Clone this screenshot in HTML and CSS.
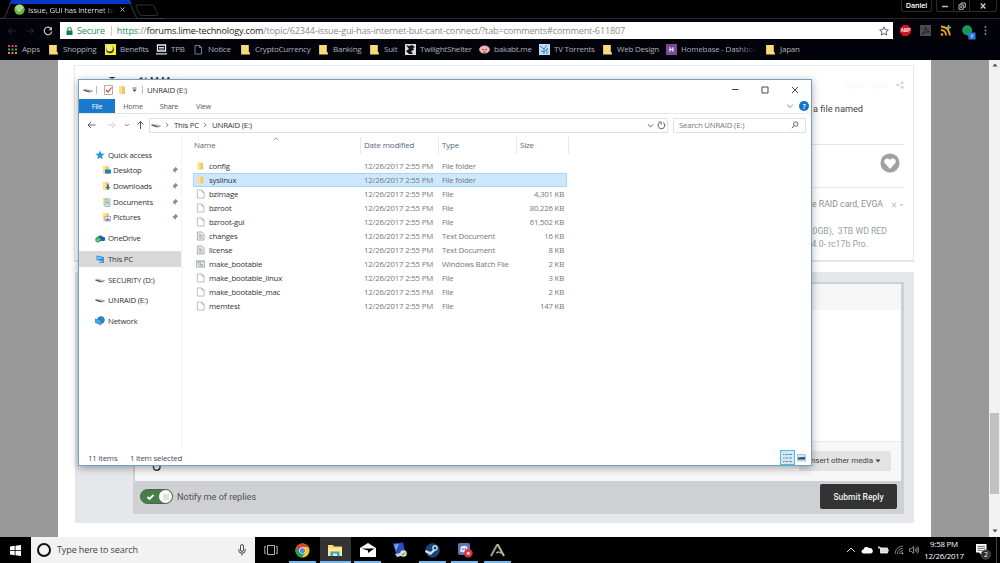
FILE: index.html
```html
<!DOCTYPE html>
<html lang="en">
<head>
    <meta charset="UTF-8">
    <meta name="viewport" content="width=device-width, initial-scale=1.0">
    <title>Desktop</title>
    <link rel="stylesheet" href="styles.css">
</head>
<body>

    <!-- Shared icons -->
    <svg class="sprite">
        <symbol id="folder" viewBox="0 0 10 10"><path d="M2 1h4l2 1v7H2z" fill="#f3c95c"/><path d="M2 1h3v8H2z" fill="#ffe08a"/></symbol>
        <symbol id="note" viewBox="0 0 10 10"><path d="M1 1h7v6l1 1v1.500H1z" fill="#f8dc7c"/></symbol>
        <symbol id="page" viewBox="0 0 10 10"><path d="M1.500.5h5L9 3v6.500H1.500z" fill="#fff" stroke="#999" stroke-width=".7"/><path d="M6.500.5V3H9" fill="none" stroke="#999" stroke-width=".7"/></symbol>
        <symbol id="text" viewBox="0 0 10 10"><path d="M1.500.5h5L9 3v6.500H1.500z" fill="#f4f4f4" stroke="#888" stroke-width=".7"/><path d="M3 3h3M3 4.500h4.500M3 6h4.500M3 7.500h4.500" stroke="#999" stroke-width=".8"/></symbol>
        <symbol id="batch" viewBox="0 0 10 10"><path d="M.5 1.500h9v7h-9z" fill="#eef2f2" stroke="#8c9999" stroke-width=".8"/><path d="M.5 2.500h9" stroke="#9aa" /><circle cx="4" cy="5" r="1.500" fill="none" stroke="#7d9292" stroke-width=".8"/><circle cx="6.500" cy="6.500" r="1.200" fill="none" stroke="#7d9292" stroke-width=".8"/></symbol>
        <symbol id="drive" viewBox="0 0 10 6"><path d="M.5 2.500 2 1.500l7.500 1.700v1.300l-3 .8L.5 3.500z" fill="#c9c9c9"/><path d="M.5 2.600 6.500 4v1.500L.5 3.800z" fill="#555"/><path d="M6.500 4l3-.8v1.300l-3 1z" fill="#999"/></symbol>
        <symbol id="pin" viewBox="0 0 8 8"><path d="M4.500.8 7.200 3.500l-.8.3-1.500 1.500-.2 1.500L3.100 5.200.8 7.300l2-2.500L1.300 3.300l1.500-.2 1.500-1.500z" fill="#858d96"/></symbol>
        <symbol id="chev" viewBox="0 0 6 6"><path d="M.8 2 3 4.200 5.200 2" fill="none" stroke="currentColor" stroke-width=".8"/></symbol>
    </svg>

    <!-- Browser frame -->
    <header class="browser">
        <div class="tabs">
            <svg class="tab-shape" width="165" height="19" viewBox="0 0 165 19">
                <path d="M11 0h119l1.500 4H9.500z" fill="#0a36c4"/>
                <path d="M0 18.500h2.500q2 0 3-3L11 2M129.500 2l6 14q1 2.500 3 2.500H165" fill="none" stroke="#3b3d44"/>
                <path d="M137 5h15.500q1 0 1.500 1l3.500 8q.5 1.500-1 1.500h-15q-1.500 0-2-1l-3.500-8q-.5-1.500 1-1.500z" fill="none" stroke="#303034"/>
            </svg>
            <div class="tab">
                <svg class="favicon" width="11" height="11" viewBox="0 0 11 11"><circle cx="5.500" cy="5.500" r="5.200" fill="#6cb83c"/><path d="M1 4a5 5 0 0 1 8-2L5 7z" fill="#a4d494"/><path d="M3 5.500 5 7.500 9 3" fill="none" stroke="#d8f0c8"/></svg>
                <span class="tab-title">Issue, GUI has internet bu</span>
                <svg class="tab-close" width="5" height="5" viewBox="0 0 5 5"><path d="M.5.5l4 4M4.500.5l-4 4" stroke="#bbb" stroke-width=".9"/></svg>
            </div>
            <div class="frame-buttons">
                <span class="user">Daniel</span>
                <span class="controls">
                    <i><svg width="8" height="8" viewBox="0 0 8 8"><path d="M1 4.500h6" stroke="#bbb" stroke-width="1.500"/></svg></i>
                    <i><svg width="8" height="8" viewBox="0 0 8 8"><path d="M3 2.500V1h4.300v4.300H6M1 2.800h4.300v4.500H1zM2.700 4.500h1v1h-1z" fill="none" stroke="#bbb" stroke-width="1"/></svg></i>
                    <i class="wide"><svg width="8" height="8" viewBox="0 0 8 8"><path d="M1.800 1.500l4.500 5M6.300 1.500l-4.500 5" stroke="#ccc" stroke-width="1.300"/></svg></i>
                </span>
            </div>
        </div>
        <div class="toolbar">
            <div class="nav-icons">
                <svg width="10" height="10" viewBox="0 0 10 10"><path d="M9 5H1.500M4.500 2l-3 3 3 3" fill="none" stroke="#20232b" stroke-width="1.200"/></svg>
                <svg width="10" height="10" viewBox="0 0 10 10"><path d="M1 5h7.500M5.500 2l3 3-3 3" fill="none" stroke="#20232b" stroke-width="1.200"/></svg>
                <svg width="10" height="10" viewBox="0 0 10 10"><path d="M8.200 2.800A3.800 3.800 0 1 0 8.800 5.500" fill="none" stroke="#c4c4c4" stroke-width="1.200"/><path d="M9 .8v3.500H5.500z" fill="#c4c4c4"/></svg>
            </div>
            <div class="omnibox">
                <svg width="7" height="8" viewBox="0 0 7 8"><path d="M.5 3.500h6V8h-6z" fill="#0b8043"/><path d="M1.800 3.500V2a1.700 1.700 0 0 1 3.400 0v1.500" fill="none" stroke="#0b8043"/></svg>
                <span class="secure">Secure</span>
                <span class="url"><b>https</b>://<em>forums.lime-technology.com</em>/topic/62344-issue-gui-has-internet-but-cant-connect/?tab=comments#comment-611807</span>
                <svg class="star" width="10" height="10" viewBox="0 0 10 10"><path d="M5 .8l1.200 2.900 3.100.3-2.300 2 .7 3.100L5 7.500 2.300 9.100 3 6 .7 4l3.100-.3z" fill="none" stroke="#555" stroke-width=".9"/></svg>
            </div>
            <div class="extensions">
                <svg width="11" height="11" viewBox="0 0 11 11"><path d="M3.300 0h4.400L11 3.300v4.400L7.700 11H3.300L0 7.700V3.300z" fill="#d5121e"/><text x="5.500" y="7.100" class="abp">ABP</text></svg>
                <svg width="11" height="11" viewBox="0 0 11 11"><path d="M0 0h11v11H0z" fill="#4b4b4d"/><path d="M2 9q3-2 3.500-7 .5 4 4 5-4-.5-7.500 2" fill="none" stroke="#222" stroke-width="1"/></svg>
                <svg width="11" height="11" viewBox="0 0 11 11"><g fill="none" stroke="#f2a31c" stroke-width="1.800"><path d="M1 1.500A9 9 0 0 1 9.800 10.500M1 5a5 5 0 0 1 5 5.500"/></g><circle cx="2" cy="9.500" r="1.300" fill="#f2a31c"/><path d="M8.500 0v5M6 2.500h5" stroke="#7bc25c" stroke-width="1.500"/></svg>
                <svg width="14" height="15" viewBox="0 0 14 15"><circle cx="5.200" cy="5.200" r="5" fill="#159957"/><path d="M3 8h4v4z" fill="#159957"/><path d="M6.500 7.500H13.500v7h-7z" fill="#3777e0"/><path d="M10 9.300v3.500" stroke="#cfe0ff"/></svg>
                <svg class="dots" width="3" height="9" viewBox="0 0 3 9"><g fill="#999"><circle cx="1.500" cy="1" r=".9"/><circle cx="1.500" cy="4.500" r=".9"/><circle cx="1.500" cy="8" r=".9"/></g></svg>
            </div>
        </div>
        <nav class="bookmarks">
            <a><svg viewBox="0 0 11 11"><path d="M1 2h9" stroke="#d94a3a" stroke-width="2" stroke-dasharray="2 1.500"/><path d="M1 5.500h9" stroke="#54a85a" stroke-width="2" stroke-dasharray="2 1.500"/><path d="M1 9h9" stroke="#c99a3c" stroke-width="2" stroke-dasharray="2 1.500"/></svg>Apps</a>
            <a><svg><use href="#note"/></svg>Shopping</a>
            <a><svg viewBox="0 0 11 11"><path d="M0 0h11v11H0z" fill="#f5ef20"/><circle cx="5" cy="5.500" r="3.800" fill="#33390e"/><circle cx="4.600" cy="4.300" r="3.200" fill="#f1ed87"/></svg>Benefits</a>
            <a><svg viewBox="0 0 11 11"><path d="M1.500 1h8v6h-8z" fill="none" stroke="#eee" stroke-width="1.300"/><path d="M0 9.800h11M3 3.500h5M3 5h5" stroke="#ddd" stroke-width="1.200"/></svg>TPB</a>
            <a><svg viewBox="0 0 11 11"><path d="M2 1.500h4.500l2 2v6.500H2zM6.500 1.500v2h2" fill="none" stroke="#8a8a8a" stroke-width=".9"/></svg>Notice</a>
            <a><svg><use href="#note"/></svg>CryptoCurrency</a>
            <a><svg><use href="#note"/></svg>Banking</a>
            <a><svg><use href="#note"/></svg>Suit</a>
            <a><svg viewBox="0 0 11 11"><path d="M0 0h11v11H0z" fill="#ddd"/><path d="M1 1l3 1 3-1 3 2-2 1 1 2-3 1 2 3H4L1 7l3-2z" fill="#111"/></svg>TwilightShelter</a>
            <a><svg viewBox="0 0 11 11"><ellipse cx="5.500" cy="5.500" rx="5.300" ry="4" fill="#efb2b7"/><path d="M3 5.500h2M6 5.500h2M4 8h3" stroke="#a74452"/></svg>bakabt.me</a>
            <a><svg viewBox="0 0 11 11"><path d="M0 0h11v11H0z" fill="#c4e0f5"/><path d="M1 2l4 3 3-4M5 5v5M2 7l3 1 4-4M8 5v5" fill="none" stroke="#3c7fc0"/></svg>TV Torrents</a>
            <a><svg><use href="#note"/></svg>Web Design</a>
            <a class="faded"><svg viewBox="0 0 11 11"><path d="M0 0h11v11H0z" fill="#7c4a9c"/><path d="M4 3.300v4.500M7 3.300v4.500M4 5.500h3" stroke="#fff" stroke-width="1.100"/></svg>Homebase - Dashboa</a>
            <a><svg><use href="#note"/></svg>Japan</a>
        </nav>
    </header>

    <!-- Forum page -->
    <main class="viewport">
        <div class="forum">
            <article class="post">
                <div class="post-head">
                    <strong>Topaz 1t M M</strong>
                    <span class="report">Report post</span>
                    <svg width="8" height="8" viewBox="0 0 8 8"><g fill="#d8d8d8"><circle cx="1.700" cy="4" r="1.500"/><circle cx="6.300" cy="1.700" r="1.500"/><circle cx="6.300" cy="6.300" r="1.500"/></g><path d="M6.300 1.700 1.700 4l4.600 2.300" fill="none" stroke="#d8d8d8" stroke-width=".8"/></svg>
                </div>
                <p class="post-text">a file named</p>
                <div class="post-like">
                    <svg width="20" height="20" viewBox="0 0 20 20"><circle cx="10" cy="10" r="9.600" fill="#a0a0a0"/><path d="M10 16 4.800 10.300C2.500 7 7 3.500 10 6.900c3-3.400 7.500.1 5.200 3.400z" fill="#fff"/></svg>
                </div>
                <div class="signature">
                    <div class="sig-row"><span>de RAID card, EVGA</span><svg width="13" height="6" viewBox="0 0 13 6"><path d="M1 1l4 4M5 1 1 5" stroke="#ccc" stroke-width="1.200"/><path d="M8.500 2h4l-2 2.300z" fill="#ccc"/></svg></div>
                    <p class="sig-a">20GB),&nbsp; 3TB WD RED</p>
                    <p class="sig-b">4.0- rc17b Pro.</p>
                </div>
            </article>
            <section class="reply">
                <div class="editor">
                    <div class="editor-tools"></div>
                    <div class="editor-body"></div>
                    <div class="editor-foot">
                        <svg width="10" height="10" viewBox="0 0 10 10"><path d="M1.500 4v2a3 3 0 0 0 6.500 0V2" fill="none" stroke="#333" stroke-width="1.300"/></svg>
                        <span class="media">Insert other media <svg width="6" height="4" viewBox="0 0 6 4"><path d="M.5.500h5L3 3.500z" fill="#444"/></svg></span>
                    </div>
                    <div class="actions">
                        <span class="toggle"><svg width="9" height="8" viewBox="0 0 9 8"><path d="M1.500 4 3.500 6 7.500 2" fill="none" stroke="#fff" stroke-width="1.800"/></svg><i><svg width="6" height="6" viewBox="0 0 6 6"><path d="M0 1h6M0 3h6M0 5h6" stroke="#b5b5b5" stroke-width=".8"/></svg></i></span>
                        <span class="notify">Notify me of replies</span>
                        <button class="submit">Submit Reply</button>
                    </div>
                </div>
            </section>
        </div>
        <div class="scrollbar">
            <svg width="6" height="4" viewBox="0 0 6 4"><path d="M3 .5 5.500 3.500h-5z" fill="#505050"/></svg>
            <i class="thumb"></i>
            <svg width="6" height="4" viewBox="0 0 6 4"><path d="M3 3.500.5.500h5z" fill="#505050"/></svg>
        </div>
    </main>

    <!-- File explorer window -->
    <div class="explorer">
        <div class="title-bar">
            <svg class="t-drive" width="10" height="6"><use href="#drive"/></svg>
            <i class="sep"></i>
            <svg class="t-check" width="9" height="10" viewBox="0 0 9 10"><path d="M.5.500h8v9h-8z" fill="#fff" stroke="#999" stroke-width=".8"/><path d="M2 5l2 2 3.500-4.500" fill="none" stroke="#d0482c" stroke-width="1.200"/></svg>
            <svg class="t-folder" width="10" height="10"><use href="#folder"/></svg>
            <svg class="t-more" width="5" height="6" viewBox="0 0 5 6"><path d="M.5 1h4" stroke="#444" stroke-width=".8"/><path d="M.5 2.500h4l-2 2.500z" fill="#444"/></svg>
            <i class="sep"></i>
            <span class="win-title">UNRAID (E:)</span>
            <span class="win-buttons">
                <svg width="8" height="8" viewBox="0 0 8 8"><path d="M1 3.500h6.500" stroke="#333" stroke-width=".9"/></svg>
                <svg width="8" height="8" viewBox="0 0 8 8"><path d="M1 1h6v6H1z" fill="none" stroke="#333" stroke-width=".9"/></svg>
                <svg width="8" height="8" viewBox="0 0 8 8"><path d="M1 1l6 6M7 1 1 7" stroke="#333" stroke-width=".9"/></svg>
            </span>
        </div>
        <div class="ribbon">
            <span class="file">File</span><span>Home</span><span>Share</span><span>View</span>
            <svg class="collapse" width="8" height="8"><use href="#chev"/></svg>
            <i class="help">?</i>
        </div>
        <div class="address-row">
            <svg class="arrows" width="60" height="10" viewBox="0 0 60 10">
                <path d="M8.500 5H1M4 2 1 5l3 3" fill="none" stroke="#555" stroke-width=".9"/>
                <path d="M20.500 5H28M25 2l3 3-3 3" fill="none" stroke="#ccc" stroke-width=".9"/>
                <path d="M37.800 4l2 2 2-2" fill="none" stroke="#777" stroke-width=".9"/>
                <path d="M53.500 9V1.500M50.500 4.500l3-3 3 3" fill="none" stroke="#555" stroke-width="1"/>
            </svg>
            <div class="address">
                <svg width="10" height="6"><use href="#drive"/></svg>
                <svg class="crumb" width="6" height="6"><use href="#chev"/></svg>
                <span>This PC</span>
                <svg class="crumb" width="6" height="6"><use href="#chev"/></svg>
                <span>UNRAID (E:)</span>
                <svg class="drop" width="7" height="7"><use href="#chev"/></svg>
                <svg class="refresh" width="9" height="9" viewBox="0 0 9 9"><path d="M6.200 1.600A3.300 3.300 0 1 1 2.600 1.700" fill="none" stroke="#555" stroke-width="1"/><path d="M1.500 1h2.700v2.600" fill="none" stroke="#555" stroke-width=".9"/></svg>
            </div>
            <div class="search">
                <span>Search UNRAID (E:)</span>
                <svg width="8" height="8" viewBox="0 0 8 8"><circle cx="4.800" cy="3" r="2.200" fill="none" stroke="#555" stroke-width=".9"/><path d="M3.300 4.600.8 7.200" stroke="#555" stroke-width="1"/></svg>
            </div>
        </div>
        <div class="panes">
            <aside class="tree">
                <div class="node"><svg viewBox="0 0 10 10"><path d="M5 .5l1.300 3 3.200.2L7 5.900l.8 3.300L5 7.500 2.200 9.200 3 5.900.5 3.700l3.200-.2z" fill="#2f93d8"/></svg>Quick access</div>
                <div class="node sub"><svg viewBox="0 0 10 10"><use href="#folder"/><path d="M4 4.500h6v4H4z" fill="#1981c4"/></svg>Desktop<svg class="pin"><use href="#pin"/></svg></div>
                <div class="node sub"><svg viewBox="0 0 10 10"><use href="#folder"/><path d="M6 3.500h2v2.500h1.500L7 9 4.500 6H6z" fill="#2878b8"/></svg>Downloads<svg class="pin"><use href="#pin"/></svg></div>
                <div class="node sub"><svg viewBox="0 0 10 10"><use href="#folder"/><path d="M4 2h5v7.500H4z" fill="#e4eef4" stroke="#7899aa" stroke-width=".7"/><path d="M5 4h3M5 5.500h3M5 7h3" stroke="#58a" stroke-width=".6"/></svg>Documents<svg class="pin"><use href="#pin"/></svg></div>
                <div class="node sub"><svg viewBox="0 0 10 10"><use href="#folder"/><path d="M4 4.500h5.500v4.500H4z" fill="#e8eef4" stroke="#8899aa" stroke-width=".7"/><path d="M4.500 8.500l2-2.500 2.500 2.500z" fill="#668"/></svg>Pictures<svg class="pin"><use href="#pin"/></svg></div>
                <div class="node top"><svg viewBox="0 0 10 10"><path d="M3 7a2 2 0 0 1 0-3.500A3 3 0 0 1 8 4a2 2 0 0 1 1 4H3z" fill="#1565b5"/><circle cx="3" cy="6.800" r="2.700" fill="#35ad45"/><path d="M1.700 6.800l1 1 1.700-2" fill="none" stroke="#fff" stroke-width=".8"/></svg>OneDrive</div>
                <div class="node top active"><svg viewBox="0 0 10 10"><path d="M1.500 1.500 9 3v5L1.500 6z" fill="#3095d8"/><path d="M2.500 2.800 8 3.900 2.500 5.500z" fill="#85cdf5"/><path d="M4 8.500h5" stroke="#789"/></svg>This PC</div>
                <div class="node top"><svg viewBox="0 0 10 6"><use href="#drive"/></svg>SECURITY (D:)</div>
                <div class="node top"><svg viewBox="0 0 10 6"><use href="#drive"/></svg>UNRAID (E:)</div>
                <div class="node top"><svg viewBox="0 0 10 10"><circle cx="6" cy="4" r="3.700" fill="#2d83c5"/><path d="M0 3l6 1v5L0 6.500z" fill="#4ba9df" stroke="#1c6cab" stroke-width=".5"/></svg>Network</div>
            </aside>
            <div class="files">
                <svg class="sort" width="6" height="4" viewBox="0 0 6 4"><path d="M.8 3.200 3 1l2.200 2.200" fill="none" stroke="#888" stroke-width=".8"/></svg>
                <div class="row head"><span class="name">Name</span><span class="date">Date modified</span><span class="type">Type</span><span class="size">Size</span></div>
                <div class="row"><span class="name"><svg><use href="#folder"/></svg>config</span><span class="date">12/26/2017 2:55 PM</span><span class="type">File folder</span><span class="size"></span></div>
                <div class="row selected"><span class="name"><svg><use href="#folder"/></svg>syslinux</span><span class="date">12/26/2017 2:55 PM</span><span class="type">File folder</span><span class="size"></span></div>
                <div class="row"><span class="name"><svg><use href="#page"/></svg>bzimage</span><span class="date">12/26/2017 2:55 PM</span><span class="type">File</span><span class="size">4,301 KB</span></div>
                <div class="row"><span class="name"><svg><use href="#page"/></svg>bzroot</span><span class="date">12/26/2017 2:55 PM</span><span class="type">File</span><span class="size">80,226 KB</span></div>
                <div class="row"><span class="name"><svg><use href="#page"/></svg>bzroot-gui</span><span class="date">12/26/2017 2:55 PM</span><span class="type">File</span><span class="size">61,502 KB</span></div>
                <div class="row"><span class="name"><svg><use href="#text"/></svg>changes</span><span class="date">12/26/2017 2:55 PM</span><span class="type">Text Document</span><span class="size">16 KB</span></div>
                <div class="row"><span class="name"><svg><use href="#text"/></svg>license</span><span class="date">12/26/2017 2:55 PM</span><span class="type">Text Document</span><span class="size">8 KB</span></div>
                <div class="row"><span class="name"><svg><use href="#batch"/></svg>make_bootable</span><span class="date">12/26/2017 2:55 PM</span><span class="type">Windows Batch File</span><span class="size">2 KB</span></div>
                <div class="row"><span class="name"><svg><use href="#page"/></svg>make_bootable_linux</span><span class="date">12/26/2017 2:55 PM</span><span class="type">File</span><span class="size">3 KB</span></div>
                <div class="row"><span class="name"><svg><use href="#page"/></svg>make_bootable_mac</span><span class="date">12/26/2017 2:55 PM</span><span class="type">File</span><span class="size">2 KB</span></div>
                <div class="row"><span class="name"><svg><use href="#page"/></svg>memtest</span><span class="date">12/26/2017 2:55 PM</span><span class="type">File</span><span class="size">147 KB</span></div>
            </div>
        </div>
        <div class="status">
            <span class="count">11 items</span><span>1 item selected</span>
            <span class="views">
                <i class="on"><svg width="11" height="10" viewBox="0 0 11 10"><path d="M1 1.500h1.500M1 5h1.500M1 8.500h1.500" stroke="#b0703c"/><path d="M3.500 1.500H6M3.500 5H6M3.500 8.500H6M7 1.500h3M7 5h3M7 8.500h3" stroke="#6f8590"/></svg></i>
                <i><svg width="9" height="8" viewBox="0 0 9 8"><path d="M.5.500h8v6.500h-8z" fill="#d5e5f2" stroke="#8aa" stroke-width=".6"/><path d="M1 3.500 8 3v2.500H1z" fill="#1b4f85"/></svg></i>
            </span>
        </div>
    </div>

    <!-- Taskbar -->
    <footer class="taskbar">
        <div class="start"><svg width="11" height="11" viewBox="0 0 11 11"><path d="M0 1.500l4.700-.7v4.400H0zM5.500.7 11 0v5.200H5.500zM0 6h4.700v4.300L0 9.600zM5.500 6H11v5l-5.500-.7z" fill="#fff"/></svg></div>
        <div class="cortana">
            <i class="ring"></i>
            <span>Type here to search</span>
            <svg width="8" height="12" viewBox="0 0 8 12"><rect x="2.500" y=".6" width="3" height="6.800" rx="1.500" fill="none" stroke="#333" stroke-width=".9"/><path d="M.8 5v1.500a3.200 2.700 0 0 0 6.400 0V5M4 9.200V11.500" fill="none" stroke="#333" stroke-width=".9"/></svg>
        </div>
        <div class="apps">
            <i><svg width="14" height="12" viewBox="0 0 14 12"><path d="M3.500 1.500h7v9h-7zM2 2.500H.8v7H2M12 2.500h1.200v7H12" fill="none" stroke="#c8c8c8" stroke-width=".9"/></svg></i>
            <i class="open"><svg width="15" height="15" viewBox="0 0 15 15"><circle cx="7.500" cy="7.500" r="7" fill="#f3c614"/><path d="M1.400 4A7 7 0 0 1 13.600 4H7.500L4.500 9z" fill="#db4437"/><path d="M1.400 4A7 7 0 0 0 7 14.500l3-5.300-5.500-.2z" fill="#1fa15d"/><circle cx="7.500" cy="7.500" r="3.300" fill="#eee"/><circle cx="7.500" cy="7.500" r="2.600" fill="#4a8af4"/></svg></i>
            <i class="open current"><svg width="16" height="13" viewBox="0 0 16 13"><path d="M1 1h5l1 1.500h8V12H1z" fill="#f7d877"/><path d="M1 4h14v8H1z" fill="#ffe79a"/><path d="M3.500 12V7.500h9V12H10V9.500H6V12z" fill="#38a3c8"/></svg></i>
            <i class="open"><svg width="16" height="14" viewBox="0 0 16 14"><path d="M0 5l8-5 8 5v9H0z" fill="#fff"/><path d="M1.500 5.500h13L8 10V7.500z" fill="#000"/></svg></i>
            <i><svg width="16" height="16" viewBox="0 0 16 16"><path d="M1 1.500 11 .5l2 9-9 2z" fill="#2450c4"/><path d="M2 2.500 7 2l-3 7z" fill="#7f9ff0"/><path d="M3 12l8-2 2 3-8 2z" fill="#c9ced6"/><circle cx="11.500" cy="11.500" r="3.300" fill="#d9ddc9"/><path d="M10 12l1 1 2-2.500" fill="none" stroke="#5f8d4a"/></svg></i>
            <i class="open"><svg width="15" height="15" viewBox="0 0 15 15"><circle cx="7.500" cy="7.500" r="7.200" fill="#17457c"/><path d="M.5 8l5 2.500 4.500-4" fill="none" stroke="#e5edf5" stroke-width="2"/><circle cx="10" cy="5" r="2.200" fill="#17457c" stroke="#e5edf5" stroke-width="1.200"/><circle cx="5" cy="10.300" r="1.800" fill="#c5d8e8"/></svg></i>
            <i class="open"><svg width="16" height="16" viewBox="0 0 16 16"><rect x="1" y="1" width="12" height="12" rx="2" fill="#6273b5"/><path d="M4 4.500q3-1.500 6 0l1 5-2 .8H5l-2-.8z" fill="#e5e8f5"/><circle cx="5.800" cy="7.200" r=".9" fill="#6273b5"/><circle cx="8.500" cy="7.200" r=".9" fill="#6273b5"/><circle cx="11.300" cy="11.300" r="4.300" fill="#dd3540"/><circle cx="11.300" cy="11.300" r="1.500" fill="#fbe9e9"/></svg></i>
            <i class="open"><svg width="15" height="13" viewBox="0 0 15 13"><path d="M1 12 7 1" stroke="#8fa98d" stroke-width="2"/><path d="M6.500 1h1.500l6 11" fill="none" stroke="#c7b693" stroke-width="2"/><path d="M6 9q3-2 5.500.5" fill="none" stroke="#83a7b0" stroke-width="1.500"/></svg></i>
        </div>
        <div class="tray">
            <svg width="10" height="8" viewBox="0 0 10 8"><path d="M1 6l4-4 4 4" fill="none" stroke="#ddd"/></svg>
            <svg width="12" height="8" viewBox="0 0 12 8"><path d="M2.500 7.500a2 2 0 0 1 0-4A3 3 0 0 1 8 2.300a2.600 2.600 0 0 1 2 5.200z" fill="#fff"/></svg>
            <svg width="11" height="8" viewBox="0 0 11 8"><path d="M2.500 2h7v5h-7z" fill="#ddd" stroke="#fff" stroke-width=".8"/><path d="M10.300 3.500v2M0 1.500h3M1 0v3" stroke="#ccc"/></svg>
            <svg width="10" height="10" viewBox="0 0 10 10"><g fill="none" stroke="#999" stroke-width=".8"><path d="M1 9A8 8 0 0 1 9 1M3.300 9A5.700 5.700 0 0 1 9 3.300M5.500 9A3.500 3.500 0 0 1 9 5.500"/></g><circle cx="8.300" cy="8.300" r=".9" fill="#ddd"/></svg>
            <svg width="10" height="8" viewBox="0 0 10 8"><path d="M.5 2.700h1.800L4.500.6v6.800L2.300 5.300H.5zM6 2.500q1 1.500 0 3M7.300 1.500q1.800 2.500 0 5M8.700.5q2 3.500 0 7" fill="none" stroke="#bbb" stroke-width=".7"/></svg>
        </div>
        <div class="clock"><span>9:58 PM</span><span>12/26/2017</span></div>
        <div class="notices"><svg width="16" height="17" viewBox="0 0 16 17"><path d="M1 1h10.500v8.500H6.500V12L4 9.500H1z" fill="#fff"/><path d="M2.500 3.300h7.500M2.500 5.300h7.500M2.500 7.300h5" stroke="#444" stroke-width=".8"/><circle cx="10.800" cy="11.500" r="4.700" fill="#303030" stroke="#777" stroke-width=".6"/><text x="10.800" y="14.300" class="badge">2</text></svg></div>
        <i class="peek"></i>
    </footer>

</body>
</html>
```
FILE: styles.css
```css
* {
    box-sizing: border-box;
}

body {
    margin: 0;
    width: 1000px;
    height: 563px;
    overflow: hidden;
    display: flex;
    flex-direction: column;
    position: relative;
    background: #000;
    font-family: "Open Sans", "Noto Sans", sans-serif;
    font-size: 7.800px;
    letter-spacing: -0.2px;
    line-height: 10px;
}

p {
    margin: 0;
}

i, em {
    font-style: normal;
}

svg {
    flex: none;
    display: block;
}

.sprite {
    position: absolute;
    width: 0;
    height: 0;
}

/* Browser frame */
.browser {
    height: 60px;
    flex: none;
    background: #02030a;
    white-space: nowrap;
}

.tabs {
    height: 19px;
    display: flex;
    position: relative;
    background: #000;
    border-bottom: 1px solid #25272c;
}

.tab-shape {
    position: absolute;
    left: 0;
    top: 0;
}

.tab {
    display: flex;
    align-items: center;
    padding: 1px 0 0 14px;
    width: 140px;
    position: relative;
}

.tab-title {
    width: 87px;
    margin-left: 3px;
    overflow: hidden;
    color: #ddd;
    font-size: 7.800px;
    -webkit-mask-image: linear-gradient(90deg, #000 85%, transparent);
    mask-image: linear-gradient(90deg, #000 85%, transparent);
}

.tab-close {
    margin-left: 5px;
}

.frame-buttons {
    margin-left: auto;
    padding-right: 3px;
    display: flex;
    gap: 4px;
    height: 12px;
}

.user {
    width: 31px;
    border: 1px solid #2c2c2c;
    border-top: 0;
    border-radius: 0 0 3px 3px;
    color: #fff;
    font-weight: 600;
    font-size: 7.200px;
    letter-spacing: -0.1px;
    text-align: center;
    line-height: 11px;
}

.controls {
    display: flex;
    border: 1px solid #2c2c2c;
    border-top: 0;
    border-radius: 0 0 3px 3px;
}

.controls i {
    width: 16px;
    display: flex;
    justify-content: center;
    align-items: center;
}

.controls i + i {
    border-left: 1px solid #2c2c2c;
}

.controls .wide {
    width: 27px;
}

.toolbar {
    height: 23px;
    display: flex;
    align-items: center;
}

.nav-icons {
    width: 60px;
    display: flex;
    gap: 8px;
    padding-left: 7px;
}

.omnibox {
    width: 833px;
    height: 17px;
    background: #fff;
    display: flex;
    align-items: center;
    padding: 0 4px 0 6px;
    font-size: 9.100px;
    letter-spacing: -0.170px;
}

.secure {
    color: #2f8f5d;
    margin-left: 4px;
    padding-right: 6px;
    border-right: 1px solid #ccc;
}

.url {
    margin-left: 5px;
    color: #8a8a8a;
}

.url b {
    font-weight: 400;
    color: #2f8f5d;
}

.url em {
    color: #222;
}

.star {
    margin-left: auto;
}

.extensions {
    display: flex;
    align-items: center;
    gap: 9px;
    padding-left: 7px;
}

.extensions svg:nth-child(4) {
    margin: 3px 0 0 2px;
}

.extensions .dots {
    margin-left: -1px;
}

.abp {
    font: 700 4.500px "Liberation Sans", sans-serif;
    letter-spacing: 0;
    fill: #fff;
    text-anchor: middle;
}

.bookmarks {
    display: flex;
    padding-left: 7px;
    height: 14px;
    align-items: center;
    color: #aeb0b4;
    font-size: 8px;
    letter-spacing: -0.220px;
}

.bookmarks a {
    display: flex;
    align-items: center;
    gap: 4px;
    flex: none;
    overflow: hidden;
}

.bookmarks svg {
    width: 11px;
    height: 11px;
}

.bookmarks a:nth-child(1) { width: 41px; }
.bookmarks a:nth-child(2) { width: 57px; }
.bookmarks a:nth-child(3) { width: 51px; }
.bookmarks a:nth-child(4) { width: 37px; }
.bookmarks a:nth-child(5) { width: 47px; }
.bookmarks a:nth-child(6) { width: 78px; }
.bookmarks a:nth-child(7) { width: 51px; }
.bookmarks a:nth-child(8) { width: 36px; }
.bookmarks a:nth-child(9) { width: 74px; }
.bookmarks a:nth-child(10) { width: 60px; }
.bookmarks a:nth-child(11) { width: 63px; }
.bookmarks a:nth-child(12) { width: 64px; }
.bookmarks a:nth-child(13) { width: 91px; margin-right: 8px; }

.bookmarks .faded {
    -webkit-mask-image: linear-gradient(90deg, #000 80%, transparent);
    mask-image: linear-gradient(90deg, #000 80%, transparent);
}

/* Forum page */
.viewport {
    flex: 1;
    display: flex;
    background: #999;
    padding-left: 58px;
    font-family: Roboto, sans-serif;
    letter-spacing: 0;
}

.forum {
    width: 873px;
    background: #fff;
    padding: 5px 17px 0 16px;
}

.post {
    height: 197px;
    border: 1px solid #e9e9e9;
    border-bottom: 2px solid #e5e5e5;
    padding: 9px 9px 0 34px;
}

.post-head {
    display: flex;
    align-items: center;
    height: 20px;
}

.post-head strong {
    font-size: 10px;
    color: #333;
    font-weight: 500;
    align-self: flex-start;
    padding-top: 2px;
}

.report {
    margin: 0 8px 0 auto;
    color: #f8f8f8;
    font-size: 8.500px;
}

.post-text {
    padding: 9px 41px 0 0;
    text-align: right;
    font-size: 9.200px;
    color: #444;
    height: 49px;
}

.post-like {
    height: 44px;
    border-top: 1px solid #e6e6e6;
    border-bottom: 1px solid #e6e6e6;
    padding: 8px 4px 0 0;
    display: flex;
    justify-content: flex-end;
}

.signature {
    padding-top: 10px;
    color: #98a0a6;
    font-size: 8.700px;
    line-height: 13.500px;
    text-align: right;
}

.sig-row {
    display: flex;
    justify-content: flex-end;
    align-items: center;
    gap: 8px;
    margin-bottom: 13px;
    color: #8e8e8e;
}

.sig-a {
    padding-right: 17px;
}

.sig-b {
    padding-right: 36px;
}

.reply {
    margin: 10px 0 0 1px;
    height: 251px;
    background: #e6e7ea;
    padding: 10px 10px 9px 58px;
}

.editor {
    height: 232px;
    background: #cfd0d4;
    padding: 2px 3px 0 2px;
}

.editor-tools {
    height: 26px;
    background: #f6f6f6;
}

.editor-body {
    height: 132px;
    background: #fff;
    border-bottom: 1px solid #e8e8e8;
}

.editor-foot {
    height: 39px;
    background: #f7f7f7;
    display: flex;
    align-items: center;
    justify-content: space-between;
    padding: 0 10px 1px 17px;
}

.editor-foot > svg {
    margin-top: 9px;
}

.media {
    height: 20px;
    padding: 0 10px;
    background: #e3e3e3;
    border-radius: 2px;
    display: flex;
    align-items: center;
    gap: 2px;
    font-size: 8px;
    letter-spacing: -0.050px;
    color: #444;
}

.actions {
    height: 31px;
    display: flex;
    align-items: center;
    padding: 0 4px 0 5px;
}

.toggle {
    width: 33px;
    height: 15px;
    border-radius: 8px;
    border: 1px solid #48664b;
    background: #477f4c;
    display: flex;
    align-items: center;
    justify-content: space-between;
    padding: 0 0 0 5px;
}

.toggle i {
    width: 13px;
    height: 13px;
    border-radius: 50%;
    background: #fff;
    display: flex;
    align-items: center;
    justify-content: center;
}

.notify {
    margin-left: 4px;
    font-size: 9.100px;
    color: #505257;
}

.submit {
    margin-left: auto;
    width: 77px;
    height: 25px;
    border: 0;
    border-radius: 2px;
    background: #333;
    color: #eee;
    font: 500 8.500px Roboto, sans-serif;
    padding: 0;
}

.scrollbar {
    margin-left: auto;
    width: 11px;
    background: #f1f1f1;
    display: flex;
    flex-direction: column;
    align-items: center;
    padding: 3px 0 4px;
}

.thumb {
    width: 9px;
    height: 81px;
    background: #c1c1c1;
    margin: 346px 0 auto;
}

/* File explorer, floats over the page */
.explorer {
    position: absolute;
    left: 78px;
    top: 79px;
    width: 734px;
    height: 387px;
    background: #fff;
    border: 1px solid #6fa3c3;
    box-shadow: 0 2px 8px rgba(0, 0, 0, 0.35);
    display: flex;
    flex-direction: column;
    color: #333;
    white-space: nowrap;
}

.title-bar {
    height: 19px;
    display: flex;
    align-items: center;
    padding-left: 4px;
}

.sep {
    width: 1px;
    height: 8px;
    background: #bbb;
    margin-left: 3px;
}

.t-check {
    margin-left: 7px;
}

.t-folder {
    margin-left: 4px;
}

.t-more {
    margin-left: 5px;
}

.title-bar .t-more + .sep {
    margin-left: 5px;
}

.win-title {
    margin-left: 4px;
}

.win-buttons {
    margin-left: auto;
    display: flex;
    gap: 22px;
    padding-right: 12px;
}

.ribbon {
    height: 15px;
    display: flex;
    align-items: center;
    border-bottom: 1px solid #e8e8e8;
    font-size: 7.200px;
    color: #555;
}

.ribbon span {
    width: 36px;
    text-align: center;
}

.ribbon span:nth-child(4) {
    width: 33px;
}

.ribbon .file {
    background: #1979ca;
    color: #fff;
    height: 14px;
    line-height: 14px;
}

.collapse {
    margin-left: auto;
    color: #aaa;
}

.help {
    width: 10px;
    height: 10px;
    border-radius: 50%;
    background: #0f74c8;
    color: #fff;
    font-weight: 600;
    text-align: center;
    line-height: 10px;
    margin: 0 2px 0 5px;
}

.address-row {
    height: 22px;
    display: flex;
    align-items: center;
    padding-left: 8px;
}

.address {
    width: 519px;
    height: 15px;
    margin-left: 2px;
    border: 1px solid #e1e1e1;
    display: flex;
    align-items: center;
    padding-left: 1px;
}

.crumb {
    transform: rotate(-90deg);
    margin: 0 4px 0 3px;
    color: #666;
}

.drop {
    margin: 0 3px 0 auto;
    color: #555;
}

.refresh {
    margin-right: 1px;
}

.search {
    width: 133px;
    height: 15px;
    margin-left: 5px;
    border: 1px solid #e1e1e1;
    display: flex;
    align-items: center;
    justify-content: space-between;
    padding: 0 6px 0 5px;
    color: #777;
}

.panes {
    flex: 1;
    display: flex;
}

.tree {
    width: 103px;
    padding-top: 11px;
    border-right: 1px solid #f4f4f4;
}

.node {
    height: 15.600px;
    width: 102px;
    display: flex;
    align-items: center;
    gap: 3px;
    padding-left: 16px;
}

.node svg {
    width: 10px;
    height: 10px;
}

.node.sub {
    padding-left: 22px;
    gap: 2px;
}

.node .pin {
    width: 8px;
    height: 8px;
    margin-left: auto;
    margin-right: 2px;
}

.node.top {
    margin-top: 5.200px;
}

.node.active {
    background: #d9d9d9;
}

.files {
    position: relative;
    padding-left: 11px;
}

.sort {
    position: absolute;
    left: 91px;
    top: 1px;
}

.row {
    width: 374px;
    height: 14.060px;
    display: flex;
    align-items: center;
    color: #777;
}

.row .name {
    width: 167px;
    display: flex;
    align-items: center;
    gap: 4px;
    padding-left: 3px;
    color: #333;
}

.row .name svg {
    width: 9px;
    height: 10px;
}

.row .date {
    width: 78px;
    padding-left: 4px;
}

.row .type {
    width: 78px;
    padding-left: 4px;
}

.row .size {
    width: 50px;
    padding-right: 2px;
    text-align: right;
}

.row.head {
    height: 17px;
    margin: 1px 0 4.500px;
    color: #55657d;
    font-size: 7.900px;
    letter-spacing: -0.150px;
}

.row.head span {
    flex: none;
    height: 17px;
    line-height: 17px;
    border-right: 1px solid #e8e8e8;
}

.row.head .name {
    color: #55657d;
    width: 168px;
    padding-left: 1px;
}

.row.head .date {
    padding-left: 3px;
}

.row.head .type {
    padding-left: 3px;
}

.row.head .size {
    text-align: left;
    padding-left: 3px;
    width: 52px;
}

.row.selected {
    background: #cce8ff;
    box-shadow: inset 0 0 0 1px #a9d6f7;
}

.status {
    height: 15px;
    display: flex;
    align-items: center;
    padding-left: 9px;
    color: #3c4a66;
}

.count {
    width: 42px;
}

.views {
    margin-left: auto;
    display: flex;
    align-items: center;
    gap: 2px;
    padding-right: 5px;
}

.views .on {
    width: 15px;
    height: 15px;
    background: #cdeaf8;
    border: 1px solid #5bb8dd;
    display: flex;
    align-items: center;
    justify-content: center;
}

/* Taskbar */
.taskbar {
    height: 26px;
    flex: none;
    display: flex;
    background: #000;
    color: #fff;
    white-space: nowrap;
}

.start {
    width: 31px;
    display: flex;
    align-items: center;
    justify-content: center;
}

.cortana {
    width: 224px;
    background: #f2f2f2;
    color: #444;
    font-size: 9.100px;
    letter-spacing: -0.150px;
    display: flex;
    align-items: center;
    padding: 0 9px 0 6px;
}

.cortana span {
    margin: 0 auto 0 6px;
}

.ring {
    width: 14px;
    height: 14px;
    border: 2px solid #111;
    border-radius: 50%;
}

.apps {
    display: flex;
    gap: 1.400px;
}

.apps i {
    width: 31px;
    display: flex;
    align-items: center;
    justify-content: center;
    position: relative;
}

/* Marker under running programs */
.apps .open::after {
    content: "";
    position: absolute;
    left: 2px;
    right: 2px;
    bottom: 0;
    height: 2px;
    background: #76b9ed;
}

.apps .current {
    background: #333;
}

.apps .current::after {
    left: 0;
    right: 0;
}

.tray {
    margin-left: auto;
    display: flex;
    align-items: center;
    gap: 5px;
}

.clock {
    width: 50px;
    display: flex;
    flex-direction: column;
    align-items: center;
    padding-top: 1px;
    line-height: 12px;
}

.notices {
    width: 27px;
    display: flex;
    align-items: center;
    justify-content: center;
    padding-top: 2px;
}

.badge {
    font-size: 7px;
    fill: #fff;
    text-anchor: middle;
}

.peek {
    width: 4px;
    border-left: 1px solid #444;
}
```
